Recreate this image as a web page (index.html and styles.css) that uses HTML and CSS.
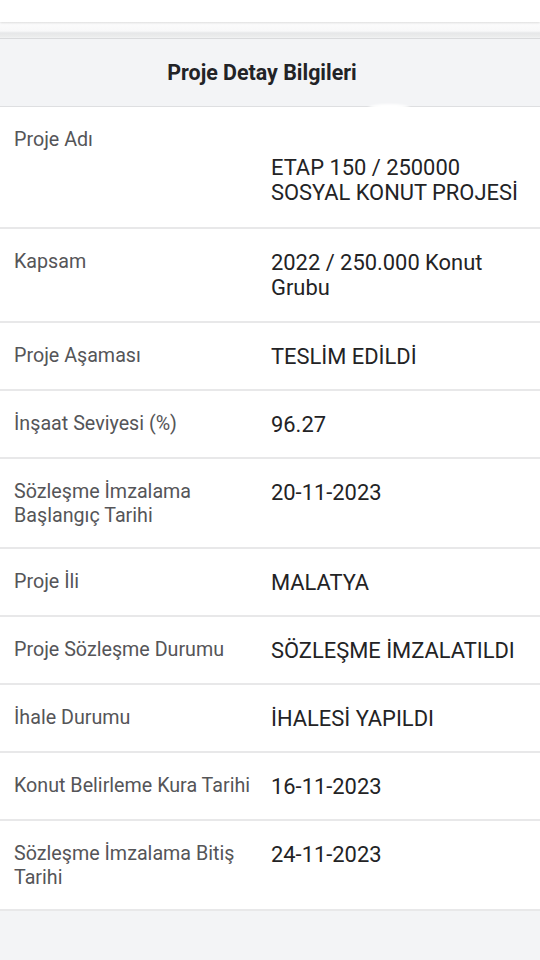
FILE: index.html
```html
<!DOCTYPE html>
<html lang="tr">
<head>
<meta charset="utf-8">
<link rel="stylesheet" href="styles.css">
</head>
<body>
<div class="topbar"></div>
<div class="gap"></div>
<section class="card">
  <h1 class="title">Proje Detay Bilgileri</h1>
  <div class="glow"></div>
  <div class="row">
    <div class="label">Proje Adı</div>
    <div class="value first">ETAP 150 / 250000 SOSYAL KONUT PROJESİ</div>
  </div>
  <div class="row">
    <div class="label">Kapsam</div>
    <div class="value two">2022 / 250.000 Konut Grubu</div>
  </div>
  <div class="row">
    <div class="label">Proje Aşaması</div>
    <div class="value">TESLİM EDİLDİ</div>
  </div>
  <div class="row">
    <div class="label">İnşaat Seviyesi (%)</div>
    <div class="value">96.27</div>
  </div>
  <div class="row">
    <div class="label">Sözleşme İmzalama Başlangıç Tarihi</div>
    <div class="value">20-11-2023</div>
  </div>
  <div class="row">
    <div class="label">Proje İli</div>
    <div class="value">MALATYA</div>
  </div>
  <div class="row">
    <div class="label">Proje Sözleşme Durumu</div>
    <div class="value">SÖZLEŞME İMZALATILDI</div>
  </div>
  <div class="row">
    <div class="label">İhale Durumu</div>
    <div class="value">İHALESİ YAPILDI</div>
  </div>
  <div class="row">
    <div class="label">Konut Belirleme Kura Tarihi</div>
    <div class="value">16-11-2023</div>
  </div>
  <div class="row">
    <div class="label">Sözleşme İmzalama Bitiş Tarihi</div>
    <div class="value">24-11-2023</div>
  </div>
</section>
</body>
</html>
```
FILE: styles.css
```css
* { box-sizing: border-box; }
html, body {
  margin: 0;
  padding: 0;
  background: #f3f4f6;
  font-family: Roboto, "Noto Sans", Arial, sans-serif;
  width: 540px;
  min-height: 960px;
}
.topbar {
  height: 22px;
  background: #ffffff;
  box-shadow: 0 1px 2px rgba(0,0,0,0.12);
  position: relative;
  z-index: 2;
}
.gap {
  height: 17px;
  background: linear-gradient(#fcfcfc 0, #f8f8f9 9px, #e6e7e9 11px, #eceded 15px, #f3f4f6 16px);
  border-bottom: 1px solid #d9dadc;
}
.card {
  position: relative;
  background: #f3f4f6;
}
.title {
  margin: 0;
  height: 68px;
  display: flex;
  align-items: center;
  justify-content: center;
  padding-right: 16px;
  font-size: 21.4px;
  font-weight: 700;
  color: #222326;
  border-bottom: 1px solid #dedfe1;
}
.glow {
  position: absolute;
  left: 368px;
  top: 65px;
  width: 42px;
  height: 9px;
  border-radius: 50%;
  background: #ffffff;
  filter: blur(1px);
}
.row {
  display: grid;
  grid-template-columns: 270px 270px;
  align-items: start;
  padding: 21px 0 20px;
  background: #ffffff;
  border-bottom: 2px solid #e8e8e9;
}
.label {
  padding: 0 14px 0 14px;
  font-size: 19.7px;
  line-height: 23.5px;
  color: #555558;
}
.value {
  padding: 0 12px 0 1px;
  font-size: 21.9px;
  line-height: 25px;
  color: #232325;
}
.value.first {
  margin-top: 27px;
  margin-bottom: 2px;
}
.value.two {
  margin-bottom: 1px;
}
```
